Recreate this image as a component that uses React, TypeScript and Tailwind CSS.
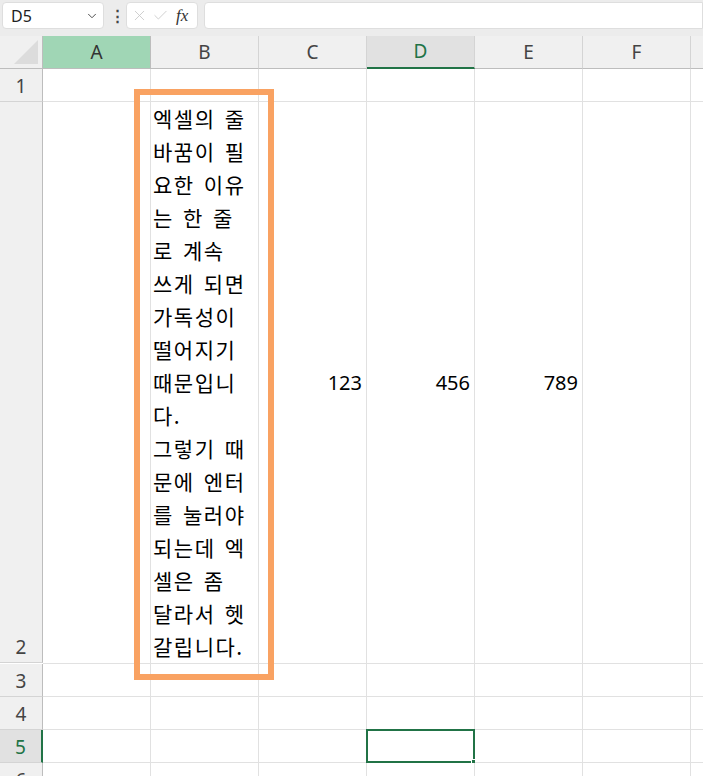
import { ChevronDown, X, Check } from "lucide-react";

const COLS = ["A", "B", "C", "D", "E", "F"];
const ROWS = [
  { n: 1, h: 33 },
  { n: 2, h: 561 },
  { n: 3, h: 33 },
  { n: 4, h: 33 },
  { n: 5, h: 33 },
  { n: 6, h: 33 },
];

const wrapped = [
  "엑셀의 줄",
  "바꿈이 필",
  "요한 이유",
  "는 한 줄",
  "로 계속",
  "쓰게 되면",
  "가독성이",
  "떨어지기",
  "때문입니",
  "다.",
  "그렇기 때",
  "문에 엔터",
  "를 눌러야",
  "되는데 엑",
  "셀은 좀",
  "달라서 헷",
  "갈립니다.",
];

const values: Record<string, string> = { C: "123", D: "456", E: "789" };

function Cell({ col, row }: { col: string; row: number }) {
  const selected = col === "D" && row === 5;
  return (
    <div className="relative border-r border-b border-[#e1e1e1] bg-white">
      {row === 2 && col === "B" && (
        <div className="pl-[2px] text-[21px] leading-[33px] tracking-[1.5px] [word-spacing:3px] text-black font-['Noto_Sans_CJK_KR',sans-serif] whitespace-nowrap">
          {wrapped.map((l, i) => (
            <div key={i}>{l}</div>
          ))}
        </div>
      )}
      {row === 2 && values[col] && (
        <div className="flex h-full items-center justify-end pr-[4px] text-[20px] text-black font-['Noto_Sans',sans-serif]">
          {values[col]}
        </div>
      )}
      {selected && (
        <div className="absolute -left-[1px] -top-[1px] -right-[1px] -bottom-[1px] border-2 border-[#217346]">
          <div className="absolute -right-[4px] -bottom-[4px] h-[6px] w-[6px] bg-[#217346] border border-white" />
        </div>
      )}
    </div>
  );
}

export default function App() {
  return (
    <div className="relative h-[776px] w-[703px] overflow-hidden bg-white font-['Noto_Sans',sans-serif]">
      {/* formula bar */}
      <div className="flex h-[36px] items-start gap-[6px] bg-[#ececec] pl-[2px] pt-[2px]">
        <div className="flex h-[27px] w-[102px] items-center justify-between rounded-[4px] border border-[#dedede] bg-white pl-[8px] pr-[4px]">
          <span className="text-[16px] text-[#222]">D5</span>
          <ChevronDown className="h-[14px] w-[14px] text-[#444]" strokeWidth={1.6} />
        </div>
        <span className="mt-[3px] w-[10px] text-center text-[15px] font-bold leading-[20px] text-[#444]">⋮</span>
        <div className="flex h-[27px] w-[72px] items-center gap-[4px] rounded-[4px] border border-[#dedede] bg-white pl-[4px]">
          <X className="h-[17px] w-[17px] text-[#c8c8c8]" strokeWidth={1.2} />
          <Check className="h-[17px] w-[17px] text-[#c8c8c8]" strokeWidth={1.2} />
          <span className="ml-[3px] text-[17px] italic text-[#333] font-['Liberation_Serif',serif]">fx</span>
        </div>
        <div className="h-[27px] flex-1 rounded-l-[4px] border border-[#dedede] bg-white" />
      </div>

      {/* sheet */}
      <div className="grid grid-cols-[43px_repeat(6,108px)_12px]">
        {/* header row */}
        <div className="relative h-[33px] border-r border-b border-[#bdbdbd] bg-[#f0f0f0]">
          <svg className="absolute right-[4px] bottom-[4px]" width="24" height="24" viewBox="0 0 24 24">
            <polygon points="24,0 24,24 0,24" fill="#dcdcdc" />
          </svg>
        </div>
        {COLS.map((c) => (
          <div
            key={c}
            className={
              c === "A"
                ? "flex h-[33px] items-center justify-center border-r border-b border-[#bdbdbd] bg-[#a0d6b5] text-[19px] text-[#333]"
                : c === "D"
                ? "flex h-[33px] items-center justify-center border-r border-b-2 border-r-[#d4d4d4] border-b-[#217346] bg-[#e1e1e1] text-[19px] text-[#217346]"
                : "flex h-[33px] items-center justify-center border-r border-b border-r-[#d4d4d4] border-b-[#bdbdbd] bg-[#f0f0f0] text-[19px] text-[#444]"
            }
          >
            {c}
          </div>
        ))}
        <div className="h-[33px] border-b border-[#bdbdbd] bg-[#f0f0f0]" />

        {ROWS.map((r) => (
          <div key={r.n} className="contents">
            <div
              style={{ height: r.h }}
              className={
                r.n === 5
                  ? "flex items-end justify-center border-r-2 border-b border-r-[#217346] border-b-[#d4d4d4] bg-[#e1e1e1] pb-[2px] text-[19px] leading-[26px] text-[#217346]"
                  : "flex items-end justify-center border-r border-b border-r-[#bdbdbd] border-b-[#d4d4d4] bg-[#f0f0f0] pb-[2px] text-[19px] leading-[26px] text-[#444]"
              }
            >
              {r.n}
            </div>
            {COLS.map((c) => (
              <Cell key={c} col={c} row={r.n} />
            ))}
            <div className="border-b border-[#e1e1e1] bg-white" />
          </div>
        ))}
      </div>

      {/* highlight box around B2 */}
      <div className="pointer-events-none absolute left-[134px] top-[89px] h-[591px] w-[140px] border-[6px] border-[#f9a262]" />
    </div>
  );
}
